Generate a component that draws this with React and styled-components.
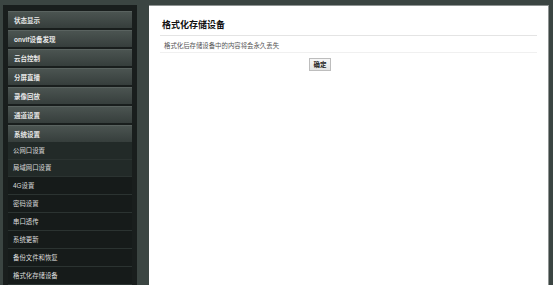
import React from "react";
import styled, { createGlobalStyle } from "styled-components";

const Global = createGlobalStyle`
  html, body { margin: 0; padding: 0; background: #3b4542; overflow: hidden; }
  body { font-family: "Liberation Sans", "Noto Sans CJK SC", sans-serif; }
  #root { height: 285px; }
`;

const Page = styled.div`
  display: flex;
  align-items: stretch;
  height: 285px;
  padding: 5px 0 0 3px;
  box-sizing: border-box;
`;

const Sidebar = styled.nav`
  width: 134px;
  flex: none;
  background: #191e1d;
  padding: 6px 5px 0 5px;
  box-sizing: border-box;
  display: flex;
  flex-direction: column;
`;

const TopItem = styled.div`
  height: 17px;
  margin-bottom: ${(p) => (p.$last ? 0 : 2)}px;
  box-sizing: border-box;
  border-top: 1px solid #5a6360;
  background: linear-gradient(#4b5451, #363e3c);
  color: #e8e8e8;
  font-size: 6.5px;
  font-weight: bold;
  display: flex;
  align-items: center;
  padding-left: 6px;
`;

const SubItem = styled.div`
  height: 18px;
  box-sizing: border-box;
  border-bottom: 1px solid #2b3331;
  background: ${(p) => (p.$lit ? "#222a28" : "#161b1a")};
  color: #dcdcdc;
  font-size: 6.4px;
  display: flex;
  align-items: center;
  padding-left: 5px;
`;

const Main = styled.main`
  margin-left: 12px;
  width: 400px;
  flex: none;
  background: #fff;
  border-top: 1px solid #8f9493;
  border-right: 1px solid #8f9493;
  box-sizing: border-box;
  padding: 0 11px;
`;

const Title = styled.h1`
  margin: 0;
  height: 30px;
  padding: 12px 0 0 2px;
  box-sizing: border-box;
  font-size: 9px;
  font-weight: bold;
  color: #111;
  border-bottom: 1px solid #e4e4e4;
`;

const Desc = styled.p`
  margin: 0;
  height: 17px;
  box-sizing: border-box;
  padding: 5px 0 0 4px;
  font-size: 6.4px;
  color: #555;
  border-bottom: 1px solid #f0f0f0;
`;

const Actions = styled.div`
  display: flex;
  padding: 5px 0 0 149px;
`;

const Button = styled.button`
  width: 22px;
  height: 13px;
  padding: 0;
  border: 1px solid #bdbdbd;
  background: linear-gradient(#f7f7f7, #e2e2e2);
  font-family: inherit;
  font-size: 6.5px;
  font-weight: bold;
  color: #222;
  line-height: 11px;
`;

const tops = ["状态显示", "onvif设备发现", "云台控制", "分屏直播", "录像回放", "通道设置", "系统设置"];
const subs = ["公网口设置", "局域网口设置", "4G设置", "密码设置", "串口透传", "系统更新", "备份文件和恢复", "格式化存储设备"];

export default function App() {
  return (
    <>
      <Global />
      <Page>
        <Sidebar>
          {tops.map((t, i) => (
            <TopItem key={t} $last={i === tops.length - 1}>{t}</TopItem>
          ))}
          {subs.map((s, i) => (
            <SubItem key={s} $lit={i < 2}>{s}</SubItem>
          ))}
        </Sidebar>
        <Main>
          <Title>格式化存储设备</Title>
          <Desc>格式化后存储设备中的内容将会永久丢失</Desc>
          <Actions>
            <Button>确定</Button>
          </Actions>
        </Main>
      </Page>
    </>
  );
}
